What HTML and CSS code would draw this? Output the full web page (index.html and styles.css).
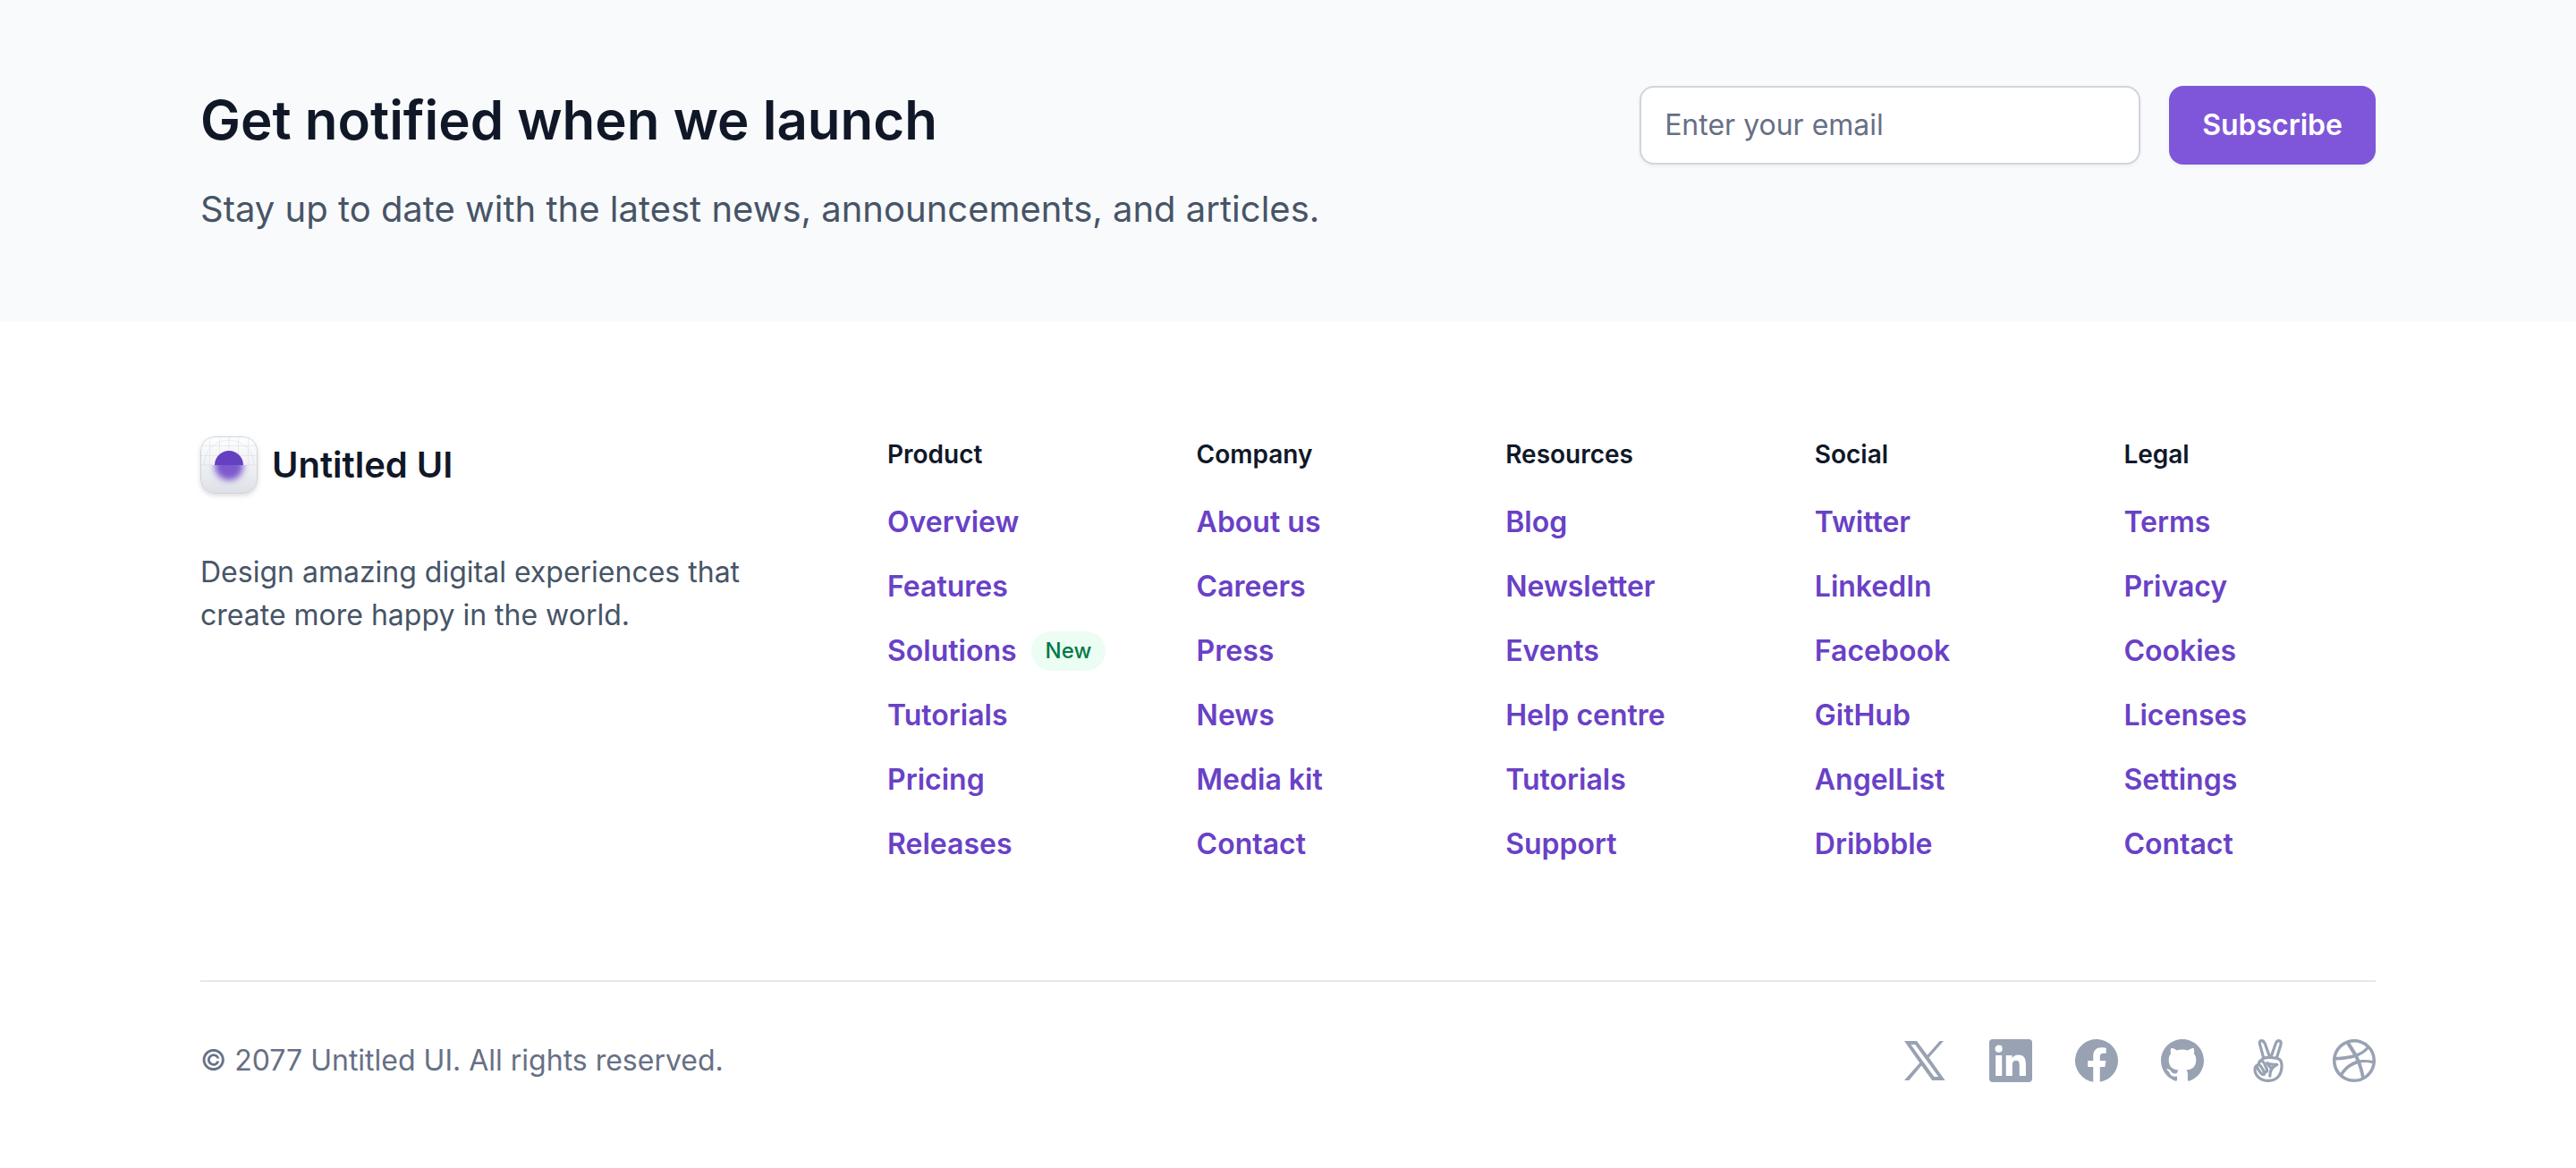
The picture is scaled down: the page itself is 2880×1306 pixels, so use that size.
FILE: index.html
```
<!DOCTYPE html>
<html lang="en">
<head>
<meta charset="utf-8">
<meta name="viewport" content="width=device-width, initial-scale=1">
<title>Untitled UI</title>
<link rel="stylesheet" href="styles.css">
</head>
<body>
<section class="newsletter">
  <div class="container newsletter-row">
    <div class="newsletter-copy">
      <h2 class="newsletter-title">Get notified when we launch</h2>
      <p class="newsletter-text">Stay up to date with the latest news, announcements, and articles.</p>
    </div>
    <form class="newsletter-form">
      <input class="email-input" type="email" placeholder="Enter your email" aria-label="Email address">
      <button class="subscribe-button" type="submit">Subscribe</button>
    </form>
  </div>
</section>
<footer class="footer">
  <div class="container">
    <div class="footer-main">
      <div class="brand">
        <a class="brand-link" href="#">
          <svg class="brand-mark" viewBox="0 0 64 64" aria-hidden="true">
            <defs>
              <linearGradient id="tile" x1="0" y1="0" x2="0" y2="1">
                <stop offset="0" stop-color="#fff"/>
                <stop offset=".5" stop-color="#eff1f4"/>
                <stop offset="1" stop-color="#dce0e6"/>
              </linearGradient>
              <filter id="soft" x="-50%" y="-50%" width="200%" height="200%"><feGaussianBlur stdDeviation="3.500"/></filter>
              <clipPath id="lower"><rect x="0" y="32" width="64" height="32"/></clipPath>
            </defs>
            <rect width="64" height="64" rx="16" fill="url(#tile)"/>
            <g fill="none" stroke="#d0d5dd" stroke-opacity=".4">
              <path d="M10.500 1v31M21.500 0v32M32 0v32M42.500 0v32M53.500 1v31M1 10.500h62M0 21.500h64M0 32h64"/>
              <path d="M4 32a28 28 0 0 1 56 0"/>
            </g>
            <rect x=".5" y=".5" width="63" height="63" rx="15.500" fill="none" stroke="#d0d5dd"/>
            <path d="M16 32a16 16 0 0 1 32 0z" fill="#6540c0"/>
            <g clip-path="url(#lower)"><circle cx="32" cy="33" r="16" fill="#6941c6" fill-opacity=".85" filter="url(#soft)"/></g>
          </svg>
          <span>Untitled UI</span>
        </a>
        <p class="brand-text">Design amazing digital experiences that create more happy in the world.</p>
      </div>
      <nav class="link-columns" aria-label="Footer">
        <div class="link-column">
          <h3 class="link-heading">Product</h3>
          <ul class="link-list">
            <li><a href="#">Overview</a></li>
            <li><a href="#">Features</a></li>
            <li><a href="#">Solutions</a><span class="badge">New</span></li>
            <li><a href="#">Tutorials</a></li>
            <li><a href="#">Pricing</a></li>
            <li><a href="#">Releases</a></li>
          </ul>
        </div>
        <div class="link-column">
          <h3 class="link-heading">Company</h3>
          <ul class="link-list">
            <li><a href="#">About us</a></li>
            <li><a href="#">Careers</a></li>
            <li><a href="#">Press</a></li>
            <li><a href="#">News</a></li>
            <li><a href="#">Media kit</a></li>
            <li><a href="#">Contact</a></li>
          </ul>
        </div>
        <div class="link-column">
          <h3 class="link-heading">Resources</h3>
          <ul class="link-list">
            <li><a href="#">Blog</a></li>
            <li><a href="#">Newsletter</a></li>
            <li><a href="#">Events</a></li>
            <li><a href="#">Help centre</a></li>
            <li><a href="#">Tutorials</a></li>
            <li><a href="#">Support</a></li>
          </ul>
        </div>
        <div class="link-column">
          <h3 class="link-heading">Social</h3>
          <ul class="link-list">
            <li><a href="#">Twitter</a></li>
            <li><a href="#">LinkedIn</a></li>
            <li><a href="#">Facebook</a></li>
            <li><a href="#">GitHub</a></li>
            <li><a href="#">AngelList</a></li>
            <li><a href="#">Dribbble</a></li>
          </ul>
        </div>
        <div class="link-column">
          <h3 class="link-heading">Legal</h3>
          <ul class="link-list">
            <li><a href="#">Terms</a></li>
            <li><a href="#">Privacy</a></li>
            <li><a href="#">Cookies</a></li>
            <li><a href="#">Licenses</a></li>
            <li><a href="#">Settings</a></li>
            <li><a href="#">Contact</a></li>
          </ul>
        </div>
      </nav>
    </div>
    <div class="footer-bottom">
      <p class="copyright">© 2077 Untitled UI. All rights reserved.</p>
      <div class="social">
        <a href="#" aria-label="X"><svg viewBox="0 0 24 24"><path fill-rule="evenodd" d="M.5 1h7l5.900 7.900L20.300 1h2.200l-8.200 9.200L23.300 23h-7.200l-6-8.300L3.200 23H.5l8.600-9.700zM4.200 3l13 18h2.400L6.600 3z"/></svg></a>
        <a href="#" aria-label="LinkedIn"><svg viewBox="0 0 24 24"><path d="M22.223 0H1.772C.792 0 0 .773 0 1.730v20.536C0 23.222.792 24 1.772 24h20.451c.98 0 1.777-.778 1.777-1.730V1.730C24 .773 23.203 0 22.223 0zM7.120 20.452H3.558V8.995H7.120zM5.339 7.434a2.063 2.063 0 1 1 0-4.125 2.063 2.063 0 0 1 0 4.125zM20.452 20.452h-3.558v-5.569c0-1.327-.024-3.038-1.852-3.038-1.851 0-2.133 1.449-2.133 2.944v5.663H9.356V8.995h3.413v1.566h.047c.473-.9 1.636-1.852 3.365-1.852 3.605 0 4.271 2.372 4.271 5.457z"/></svg></a>
        <a href="#" aria-label="Facebook"><svg viewBox="0 0 24 24"><path d="M24 12a12 12 0 1 0-13.875 11.854v-8.385H7.078V12h3.047V9.356c0-3.007 1.792-4.669 4.533-4.669 1.312 0 2.686.235 2.686.235v2.953h-1.513c-1.491 0-1.956.925-1.956 1.875V12h3.328l-.532 3.469h-2.796v8.385A12 12 0 0 0 24 12z"/></svg></a>
        <a href="#" aria-label="GitHub"><svg viewBox="0 0 24 24"><path d="M12 0C5.370 0 0 5.373 0 12c0 5.303 3.438 9.800 8.205 11.385.6.113.82-.258.82-.577 0-.285-.01-1.040-.015-2.040-3.338.724-4.042-1.610-4.042-1.610-.546-1.385-1.335-1.755-1.335-1.755-1.087-.744.084-.729.084-.729 1.205.084 1.838 1.236 1.838 1.236 1.070 1.835 2.809 1.305 3.495.998.108-.776.417-1.305.76-1.605-2.665-.3-5.466-1.332-5.466-5.930 0-1.310.465-2.380 1.235-3.220-.135-.303-.54-1.523.105-3.176 0 0 1.005-.322 3.300 1.230.96-.267 1.980-.399 3-.405 1.020.006 2.040.138 3 .405 2.280-1.552 3.285-1.230 3.285-1.230.645 1.653.24 2.873.12 3.176.765.840 1.230 1.910 1.230 3.220 0 4.610-2.805 5.625-5.475 5.920.42.360.81 1.096.81 2.220 0 1.606-.015 2.896-.015 3.286 0 .315.210.690.825.570C20.565 21.795 24 17.295 24 12c0-6.627-5.373-12-12-12z"/></svg></a>
        <a href="#" aria-label="AngelList"><svg class="line-icon" viewBox="0 0 24 24"><path d="M9.300 10.300 7.500 3.700C6.800 1.500 7.200.8 8.200.8c1 0 1.500.5 2.100 2.100L12.800 10M13.500 10l2.500-7.300c.5-1.400 1-1.900 1.900-1.900 1.200 0 1.400 1 .9 2.800l-2.100 6.800M7.700 12.300c.9-1.900 2.800-2.200 5.100-2.100 2.100.1 4.300.3 5.300 1 1.300.9 1.500 2.300 1.400 4.400-.3 4.800-3 7.600-7.500 7.600-4.300 0-7.500-2.900-7.500-6.200 0-1.400.7-2.300 1.700-2.600M9.700 19.500c.3-1.200-1.800-4.700-2.800-5.200-.9-.3-1.600.5-1.100 1.500.6 1.200 1.500 2.900 2.600 3.600.5.300 1 .4 1.300.1zM7 14.200c-.5-1.200.1-2.300 1.100-2.300 1.400.1 2.300 2.900 3.200 5.200.3.900-.8 1.600-1.500.9"/><path d="M11.300 13.300c1.600.8 3.600.9 5.600.9-2.800 1.100-4 3.300-4 6.400M11.800 14l1.600 2"/></svg></a>
        <a href="#" aria-label="Dribbble"><svg viewBox="0 0 24 24"><path d="M12 24C5.385 24 0 18.615 0 12S5.385 0 12 0s12 5.385 12 12-5.385 12-12 12zm10.120-10.358c-.35-.11-3.170-.953-6.384-.438 1.340 3.684 1.887 6.684 1.992 7.308 2.300-1.555 3.936-4.020 4.395-6.870zm-6.115 7.808c-.153-.9-.75-4.032-2.190-7.770l-.066.020c-5.790 2.015-7.860 6.025-8.040 6.400 1.730 1.358 3.920 2.166 6.290 2.166 1.420 0 2.770-.29 4-.814zm-11.620-2.580c.232-.4 3.045-5.055 8.332-6.765.135-.045.27-.084.405-.12-.26-.585-.54-1.167-.832-1.740C7.170 11.775 2.206 11.710 1.756 11.700l-.004.312c0 2.633.998 5.037 2.634 6.855zm-2.420-8.955c.46.008 4.683.026 9.477-1.248-1.698-3.018-3.530-5.558-3.800-5.928-2.868 1.350-5.010 3.990-5.676 7.170zM9.600 2.052c.282.38 2.145 2.914 3.822 6 3.645-1.365 5.190-3.440 5.373-3.702-1.810-1.610-4.190-2.586-6.795-2.586-.825 0-1.630.1-2.400.285zm10.335 3.483c-.218.29-1.935 2.493-5.724 4.040.24.490.47.985.68 1.486.08.180.150.360.220.530 3.410-.430 6.800.260 7.140.330-.020-2.420-.880-4.640-2.310-6.380z"/></svg></a>
      </div>
    </div>
  </div>
</footer>
</body>
</html>
```
FILE: styles.css
```
*, *::before, *::after { box-sizing: border-box; }
body {
  margin: 0;
  background: #fff;
  color: #101828;
  font-family: Inter, "Liberation Sans", sans-serif;
  font-size: 32px;
  line-height: 48px;
}
h2, h3, p, ul { margin: 0; padding: 0; }
a { color: inherit; text-decoration: none; }

.container {
  max-width: 2560px;
  margin: 0 auto;
  padding: 0 64px;
}

.newsletter { background: #f9fafb; padding: 96px 0; }
.newsletter-row {
  display: flex;
  align-items: flex-start;
  justify-content: space-between;
  gap: 64px;
}
.newsletter-copy { display: grid; gap: 32px; }
.newsletter-title { font-size: 60px; line-height: 76px; font-weight: 600; }
.newsletter-text { font-size: 40px; line-height: 60px; color: #475467; }
.newsletter-form { display: flex; gap: 32px; }
.email-input {
  width: 560px;
  padding: 18px 26px;
  border: 2px solid #d0d5dd;
  border-radius: 16px;
  background: #fff;
  box-shadow: 0 2px 4px rgba(16, 24, 40, .05);
  color: #101828;
  font: inherit;
}
.email-input::placeholder { color: #667085; opacity: 1; }
.subscribe-button {
  padding: 20px 37px;
  border: 0;
  border-radius: 16px;
  background: #7f56d9;
  box-shadow: 0 2px 4px rgba(16, 24, 40, .05);
  color: #fff;
  font: inherit;
  font-weight: 600;
}

.footer { padding: 128px 0 96px; }
.footer-main {
  display: grid;
  grid-template-columns: 5fr 13fr;
  gap: 128px;
  padding-bottom: 128px;
}
.brand { display: flex; flex-direction: column; gap: 64px; }
.brand-link {
  display: flex;
  align-items: center;
  gap: 16px;
  height: 64px;
  font-size: 40px;
  font-weight: 600;
}
.brand-mark {
  width: 64px;
  height: 64px;
  border-radius: 16px;
  box-shadow: 0 2px 4px rgba(16, 24, 40, .06), 0 2px 6px rgba(16, 24, 40, .1);
}
.brand-text { color: #475467; }

.link-columns {
  display: grid;
  grid-template-columns: repeat(5, 1fr);
  gap: 64px;
}
.link-column { display: flex; flex-direction: column; gap: 32px; }
.link-heading { font-size: 28px; line-height: 40px; font-weight: 600; }
.link-list {
  display: grid;
  gap: 24px;
  list-style: none;
  color: #6941c6;
  font-weight: 600;
}
.link-list li { display: flex; align-items: center; gap: 16px; height: 48px; }
.badge {
  padding: 4px 16px;
  border-radius: 22px;
  background: #ecfdf3;
  color: #027a48;
  font-size: 24px;
  line-height: 36px;
  font-weight: 500;
}

.footer-bottom {
  display: flex;
  align-items: center;
  justify-content: space-between;
  padding-top: 64px;
  border-top: 2px solid #e4e7ec;
}
.copyright { color: #667085; }
.social { display: flex; gap: 48px; }
.social a { display: block; }
.social svg { display: block; width: 48px; height: 48px; fill: #98a2b3; }
.social .line-icon {
  fill: none;
  stroke: #98a2b3;
  stroke-width: 1.6;
  stroke-linecap: round;
  stroke-linejoin: round;
}
```
